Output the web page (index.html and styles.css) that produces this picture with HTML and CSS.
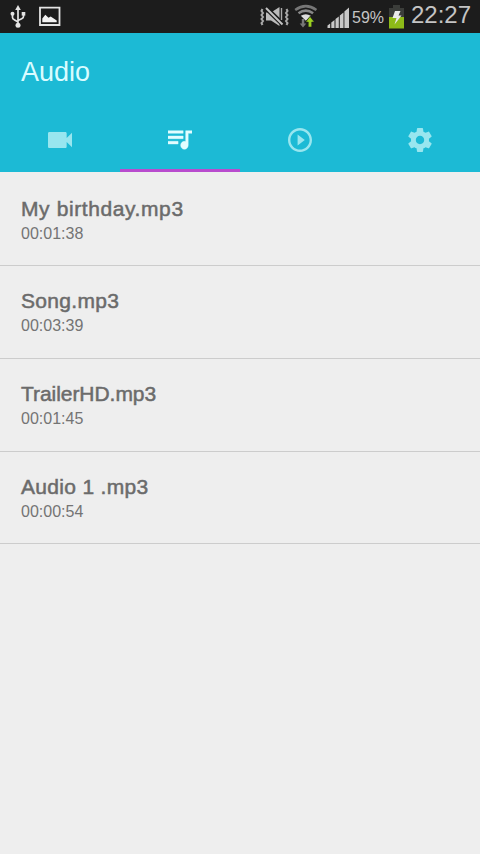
FILE: index.html
```
<!DOCTYPE html>
<html lang="en">
<head>
<meta charset="utf-8">
<title>Audio</title>
<link rel="stylesheet" href="styles.css">
</head>
<body>
<div class="status">
  <svg class="notices" width="70" height="33" viewBox="0 0 70 33" fill="none" stroke="#e4e4e4">
    <path d="M18 9V25M12.500 14v3.500q0 1.500 1.800 2.300L18 22M23.500 14v2.500q0 1.500-1.800 2.300L18 20.500" stroke-width="1.700"/>
    <path d="M18 5l2.800 5h-5.600z" fill="#e4e4e4" stroke="none"/>
    <circle cx="18" cy="25.300" r="2.500" fill="#e4e4e4" stroke="none"/>
    <circle cx="12.500" cy="13.700" r="2" fill="#e4e4e4" stroke="none"/>
    <path d="M21.700 12h3.600v3.600h-3.600z" fill="#e4e4e4" stroke="none"/>
    <path d="M40 7.700h19.500v17.300H40z" stroke-width="1.800"/>
    <path d="M42.300 22.300v-3.800l3-3.800 3.200 3 2.200-1.300 6 4v1.900z" fill="#f2f2f2" stroke="none"/>
  </svg>
  <div class="system">
    <svg width="92" height="33" viewBox="258 0 92 33">
      <path d="M266 12.500h5l8.500-5.500v19l-8.500-5.500h-5z" fill="#bbb"/>
      <path d="M265.500 7.500l17.500 17" stroke="#1c1c1c" stroke-width="4.600"/>
      <path d="M266 8l16.500 16.500" stroke="#c4c4c4" stroke-width="2"/>
      <path d="M281.500 8v12" stroke="#aaa" stroke-width="1.400"/>
      <path d="M262.500 9l-1 2 1.500 2-1.500 2 1.500 2-1.500 2 1.500 2-1.500 2 1 2M286.500 9l1 2-1.500 2 1.500 2-1.500 2 1.500 2-1.500 2 1.500 2-1 2" fill="none" stroke="#aaa" stroke-width="2"/>
      <g fill="none" stroke-width="2.600">
        <path d="M295.200 10q10.600-7.600 21.200 0" stroke="#777"/>
        <path d="M298.500 13.300q7.300-5.200 14.600 0" stroke="#888"/>
      </g>
      <path d="M300.800 15.800q5-3.300 10 0l-5 5z" fill="#ddd"/>
      <path d="M301.800 19h2.500v4.500h2l-3.300 4-3.300-4h2.100z" fill="#777"/>
      <path d="M310 16.500l4.300 5.500h-2.600v5h-3.400v-5h-2.600z" fill="#9bd021" stroke="#1c1c1c" stroke-width=".5"/>
      <path d="M327.500 28v-2.500l2.700-2v4.500zM331.300 28v-5.500l3.200-2.500v8zM335.500 28v-9l3.300-2.500V28zM339.800 28V15.500l3.700-3V28zM344.400 28V11.500l4.600-4V28z" fill="#c8c8c8"/>
    </svg>
    <span class="percent">59%</span>
    <svg class="battery" width="18" height="33" viewBox="0 0 18 33">
      <path d="M5 5h7v3h4v9H1V8h4z" fill="#3b3d3a"/>
      <path d="M1 17h15v11.500H1z" fill="#8dba18"/>
      <path d="M7 11h5.500l-2 4.500H13.500L6.500 24.500l2-6.500H4.500z" fill="#eaeaea"/>
    </svg>
    <span class="clock">22:27</span>
  </div>
</div>
<header class="header">
  <h1 class="title">Audio</h1>
  <nav class="tabs">
    <a class="tab"><svg width="24" height="24" viewBox="3 3 18 18"><path d="M17 10.500V7c0-.55-.45-1-1-1H4c-.55 0-1 .45-1 1v10c0 .55.45 1 1 1h12c.55 0 1-.45 1-1v-3.500l4 4v-11l-4 4z"/></svg></a>
    <a class="tab active"><svg width="24" height="24" viewBox="3 4 19 18" preserveAspectRatio="none"><path d="M15 6H3v2h12V6zm0 4H3v2h12v-2zM3 16h8v-2H3v2zM17 6v8.180c-.31-.11-.65-.18-1-.18-1.660 0-3 1.340-3 3s1.340 3 3 3 3-1.340 3-3V8h3V6h-5z"/></svg></a>
    <a class="tab"><svg width="24" height="24" viewBox="2 2 20 20"><path d="M10 16.500l6-4.500-6-4.500v9zM12 2C6.480 2 2 6.480 2 12s4.480 10 10 10 10-4.480 10-10S17.520 2 12 2zm0 18c-4.410 0-8-3.590-8-8s3.590-8 8-8 8 3.590 8 8-3.590 8-8 8z"/></svg></a>
    <a class="tab"><svg width="24" height="24" viewBox="2 2 20 20"><path d="M19.430 12.980c.04-.32.07-.64.07-.98s-.03-.66-.07-.98l2.110-1.650c.19-.15.24-.42.12-.64l-2-3.460c-.12-.22-.39-.3-.61-.22l-2.490 1c-.52-.4-1.080-.73-1.690-.98l-.38-2.650C14.460 2.180 14.250 2 14 2h-4c-.25 0-.46.18-.49.42l-.38 2.650c-.61.25-1.170.59-1.690.98l-2.490-1c-.23-.09-.49 0-.61.22l-2 3.460c-.13.22-.07.49.12.64l2.110 1.650c-.04.32-.07.65-.07.98s.03.66.07.98l-2.110 1.650c-.19.15-.24.42-.12.64l2 3.460c.12.22.39.3.61.22l2.490-1c.52.4 1.080.73 1.690.98l.38 2.650c.03.24.24.42.49.42h4c.25 0 .46-.18.49-.42l.38-2.650c.61-.25 1.170-.59 1.690-.98l2.490 1c.23.09.49 0 .61-.22l2-3.460c.12-.22.07-.49-.12-.64l-2.110-1.650zM12 15.500c-1.930 0-3.500-1.570-3.500-3.500s1.570-3.500 3.500-3.500 3.500 1.570 3.500 3.500-1.570 3.500-3.500 3.500z"/></svg></a>
  </nav>
</header>
<main class="list">
  <div class="row"><div class="name roomy">My birthday.mp3</div><div class="time">00:01:38</div></div>
  <div class="row"><div class="name">Song.mp3</div><div class="time">00:03:39</div></div>
  <div class="row"><div class="name tight">TrailerHD.mp3</div><div class="time">00:01:45</div></div>
  <div class="row"><div class="name">Audio 1 .mp3</div><div class="time">00:00:54</div></div>
</main>
</body>
</html>
```
FILE: styles.css
```
* { box-sizing: border-box; }
body {
  margin: 0;
  min-height: 854px;
  background: #eee;
  font-family: "Liberation Sans", Arial, sans-serif;
}
svg { display: block; }
.status {
  height: 33px;
  background: #1c1c1c;
  display: flex;
  justify-content: space-between;
  color: #c4c4c4;
  overflow: hidden;
}
.system { display: flex; padding-right: 9px; }
.percent {
  width: 34px;
  margin-left: 2px;
  font-size: 16px;
  line-height: 35px;
}
.battery { margin-left: 2px; }
.clock {
  width: 60px;
  margin-left: 5px;
  font-size: 24px;
  line-height: 30px;
}
.header {
  height: 139px;
  background: #1cbad5;
  display: flex;
  flex-direction: column;
  justify-content: space-between;
}
.title {
  margin: 0;
  padding: 24px 21px 0;
  font-size: 27px;
  line-height: 31px;
  font-weight: 400;
  color: #d9fcff;
}
.tabs { display: flex; height: 64px; }
.tab {
  flex: 1;
  display: flex;
  justify-content: center;
  padding-top: 20px;
  fill: #98e6ef;
  border-bottom: 3px solid transparent;
}
.active {
  fill: #e2fdff;
  stroke: #e2fdff;
  stroke-width: 0.3;
  border-bottom-color: #b94cce;
}
.row {
  height: 92.75px;
  padding: 22.4px 21px 0;
  border-bottom: 1px solid #ccc;
}
.row:first-child { height: 94px; padding-top: 24px; }
.name {
  font-size: 21px;
  line-height: 25px;
  letter-spacing: 0.32px;
  color: #6b6b6b;
  -webkit-text-stroke: 0.5px #6b6b6b;
}
.roomy { letter-spacing: 0.6px; }
.tight { letter-spacing: -0.05px; }
.time {
  font-size: 16px;
  line-height: 25px;
  color: #747474;
}
```
